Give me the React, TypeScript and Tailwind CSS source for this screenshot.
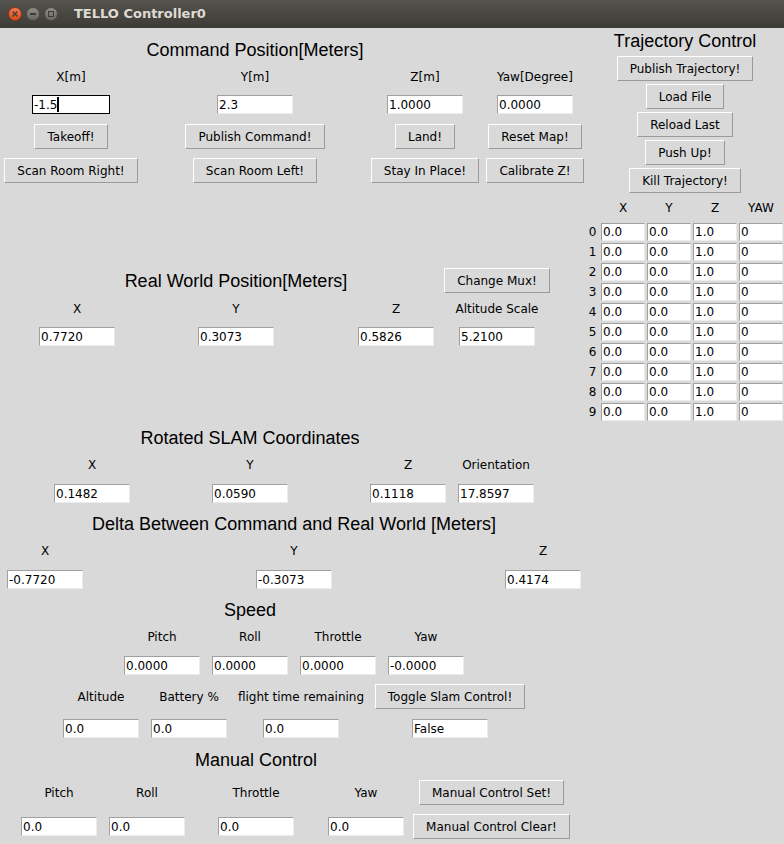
import React from "react";

const entryCls =
  "flex h-[19px] w-[76px] items-center overflow-hidden whitespace-nowrap border border-t-[#a0a0a0] border-l-[#a0a0a0] border-b-[#ececec] border-r-[#ececec] bg-white pl-[1px] leading-none";
const smallEntryCls =
  "flex h-[18px] w-[44px] items-center overflow-hidden whitespace-nowrap border border-t-[#a0a0a0] border-l-[#a0a0a0] border-b-[#ececec] border-r-[#ececec] bg-white pl-[1px] leading-none";

function Entry({ value }: { value: string }) {
  return <div className={entryCls}>{value}</div>;
}

function Btn({ children }: { children: React.ReactNode }) {
  return (
    <button
      type="button"
      className="flex h-[25px] items-center whitespace-nowrap border border-t-white border-l-white border-b-[#9a9a9a] border-r-[#9a9a9a] bg-[#d9d9d9] px-[12px] leading-none"
    >
      {children}
    </button>
  );
}

function Title({ children, className = "" }: { children: React.ReactNode; className?: string }) {
  return (
    <div className={"h-[20px] whitespace-nowrap font-['Liberation_Sans',sans-serif] text-[18px] leading-[20px] " + className}>
      {children}
    </div>
  );
}

function Label({ children }: { children: React.ReactNode }) {
  return <div className="whitespace-nowrap leading-[14px]">{children}</div>;
}

function TitleBar() {
  return (
    <div className="flex h-[28px] items-center bg-linear-to-b from-[#55534d] to-[#3c3b37]">
      <div className="ml-[8px] flex gap-[4px]">
        <div className="flex h-[14px] w-[14px] items-center justify-center rounded-full border border-[#8a3515] bg-linear-to-b from-[#f47a50] to-[#df4a17]">
          <svg width="6" height="6" viewBox="0 0 6 6">
            <path d="M0.5 0.5L5.5 5.5M5.5 0.5L0.5 5.5" stroke="#3c3b37" strokeWidth="1.3" />
          </svg>
        </div>
        <div className="flex h-[14px] w-[14px] items-center justify-center rounded-full border border-[#4a4944] bg-linear-to-b from-[#8f8d86] to-[#6a6862]">
          <div className="h-[2px] w-[6px] bg-[#3c3b37]" />
        </div>
        <div className="flex h-[14px] w-[14px] items-center justify-center rounded-full border border-[#4a4944] bg-linear-to-b from-[#8f8d86] to-[#6a6862]">
          <div className="h-[6px] w-[6px] border border-[#3c3b37]" />
        </div>
      </div>
      <div className="ml-[16px] font-['DejaVu_Sans',sans-serif] text-[13px] font-bold text-[#dfdbd2]">TELLO Controller0</div>
    </div>
  );
}

const trajRows = ["0", "1", "2", "3", "4", "5", "6", "7", "8", "9"];

export default function App() {
  return (
    <div className="h-[844px] w-[784px] overflow-hidden bg-[#d9d9d9] font-['DejaVu_Sans',sans-serif] text-[12px] text-black">
      <TitleBar />
      <div className="flex">
        {/* left panel */}
        <div className="w-[586px]">
          {/* Command Position */}
          <div className="mt-[12px] grid grid-cols-[142px_226px_114px_106px] justify-items-center">
            <Title className="col-start-2">Command Position[Meters]</Title>
          </div>
          <div className="mt-[10px] grid grid-cols-[142px_226px_114px_106px] justify-items-center">
            <Label>X[m]</Label>
            <Label>Y[m]</Label>
            <Label>Z[m]</Label>
            <Label>Yaw[Degree]</Label>
          </div>
          <div className="mt-[11px] grid grid-cols-[142px_226px_114px_106px] justify-items-center">
            <div className="flex h-[19px] w-[78px] items-center border border-black bg-white pl-[1px] leading-none">
              -1.5<span className="h-[15px] w-[2px] bg-black" />
            </div>
            <Entry value="2.3" />
            <Entry value="1.0000" />
            <Entry value="0.0000" />
          </div>
          <div className="mt-[10px] grid grid-cols-[142px_226px_114px_106px] justify-items-center">
            <Btn>Takeoff!</Btn>
            <Btn>Publish Command!</Btn>
            <Btn>Land!</Btn>
            <Btn>Reset Map!</Btn>
          </div>
          <div className="mt-[9px] grid grid-cols-[142px_226px_114px_106px] justify-items-center">
            <Btn>Scan Room Right!</Btn>
            <Btn>Scan Room Left!</Btn>
            <Btn>Stay In Place!</Btn>
            <Btn>Calibrate Z!</Btn>
          </div>

          {/* Real World Position */}
          <div className="ml-[30px] mt-[85px] grid grid-cols-[94px_224px_96px_106px] items-center justify-items-center">
            <Title className="col-start-2">Real World Position[Meters]</Title>
            <div className="col-start-4">
              <Btn>Change Mux!</Btn>
            </div>
          </div>
          <div className="ml-[30px] mt-[9px] grid grid-cols-[94px_224px_96px_106px] justify-items-center">
            <Label>X</Label>
            <Label>Y</Label>
            <Label>Z</Label>
            <Label>Altitude Scale</Label>
          </div>
          <div className="ml-[30px] mt-[11px] grid grid-cols-[94px_224px_96px_106px] justify-items-center">
            <Entry value="0.7720" />
            <Entry value="0.3073" />
            <Entry value="0.5826" />
            <Entry value="5.2100" />
          </div>

          {/* Rotated SLAM */}
          <div className="ml-[44px] mt-[82px] grid grid-cols-[96px_220px_96px_80px] justify-items-center">
            <Title className="col-start-2">Rotated SLAM Coordinates</Title>
          </div>
          <div className="ml-[44px] mt-[10px] grid grid-cols-[96px_220px_96px_80px] justify-items-center">
            <Label>X</Label>
            <Label>Y</Label>
            <Label>Z</Label>
            <Label>Orientation</Label>
          </div>
          <div className="ml-[44px] mt-[12px] grid grid-cols-[96px_220px_96px_80px] justify-items-center">
            <Entry value="0.1482" />
            <Entry value="0.0590" />
            <Entry value="0.1118" />
            <Entry value="17.8597" />
          </div>

          {/* Delta */}
          <div className="mt-[11px] grid grid-cols-[90px_408px_90px] justify-items-center">
            <Title className="col-start-2">Delta Between Command and Real World [Meters]</Title>
          </div>
          <div className="mt-[10px] grid grid-cols-[90px_408px_90px] justify-items-center">
            <Label>X</Label>
            <Label>Y</Label>
            <Label>Z</Label>
          </div>
          <div className="mt-[12px] grid grid-cols-[90px_408px_90px] justify-items-center">
            <Entry value="-0.7720" />
            <Entry value="-0.3073" />
            <Entry value="0.4174" />
          </div>

          {/* Speed */}
          <div className="ml-[118px] mt-[11px] grid grid-cols-[88px_88px_88px_88px] justify-items-center">
            <Title className="col-start-2">Speed</Title>
          </div>
          <div className="ml-[118px] mt-[10px] grid grid-cols-[88px_88px_88px_88px] justify-items-center">
            <Label>Pitch</Label>
            <Label>Roll</Label>
            <Label>Throttle</Label>
            <Label>Yaw</Label>
          </div>
          <div className="ml-[118px] mt-[12px] grid grid-cols-[88px_88px_88px_88px] justify-items-center">
            <Entry value="0.0000" />
            <Entry value="0.0000" />
            <Entry value="0.0000" />
            <Entry value="-0.0000" />
          </div>
          <div className="ml-[52px] mt-[9px] grid grid-cols-[98px_78px_146px_152px] items-center justify-items-center">
            <Label>Altitude</Label>
            <Label>Battery %</Label>
            <Label>flight time remaining</Label>
            <Btn>Toggle Slam Control!</Btn>
          </div>
          <div className="ml-[52px] mt-[10px] grid grid-cols-[98px_78px_146px_152px] justify-items-center">
            <Entry value="0.0" />
            <Entry value="0.0" />
            <Entry value="0.0" />
            <Entry value="False" />
          </div>

          {/* Manual Control */}
          <div className="ml-[18px] mt-[12px] grid grid-cols-[82px_94px_124px_96px_155px] justify-items-center">
            <Title className="col-start-3">Manual Control</Title>
          </div>
          <div className="ml-[18px] mt-[10px] grid grid-cols-[82px_94px_124px_96px_155px] items-center justify-items-center">
            <Label>Pitch</Label>
            <Label>Roll</Label>
            <Label>Throttle</Label>
            <Label>Yaw</Label>
            <Btn>Manual Control Set!</Btn>
          </div>
          <div className="ml-[18px] mt-[9px] grid grid-cols-[82px_94px_124px_96px_155px] items-center justify-items-center">
            <Entry value="0.0" />
            <Entry value="0.0" />
            <Entry value="0.0" />
            <Entry value="0.0" />
            <Btn>Manual Control Clear!</Btn>
          </div>
        </div>

        {/* right panel: trajectory */}
        <div className="flex w-[198px] flex-col items-center">
          <Title className="mt-[3px]">Trajectory Control</Title>
          <div className="mt-[5px] flex flex-col items-center gap-[3px]">
            <Btn>Publish Trajectory!</Btn>
            <Btn>Load File</Btn>
            <Btn>Reload Last</Btn>
            <Btn>Push Up!</Btn>
            <Btn>Kill Trajectory!</Btn>
          </div>
          <div className="mt-[8px] grid grid-cols-[13px_44px_44px_44px_44px] gap-x-[2px] self-start justify-items-center">
            <div />
            <Label>X</Label>
            <Label>Y</Label>
            <Label>Z</Label>
            <Label>YAW</Label>
          </div>
          <div className="mt-[8px] grid grid-cols-[13px_44px_44px_44px_44px] gap-x-[2px] gap-y-[2px] self-start">
            {trajRows.map((r) => (
              <React.Fragment key={r}>
                <div className="flex items-center justify-center leading-none">{r}</div>
                <div className={smallEntryCls}>0.0</div>
                <div className={smallEntryCls}>0.0</div>
                <div className={smallEntryCls}>1.0</div>
                <div className={smallEntryCls}>0</div>
              </React.Fragment>
            ))}
          </div>
        </div>
      </div>
    </div>
  );
}
